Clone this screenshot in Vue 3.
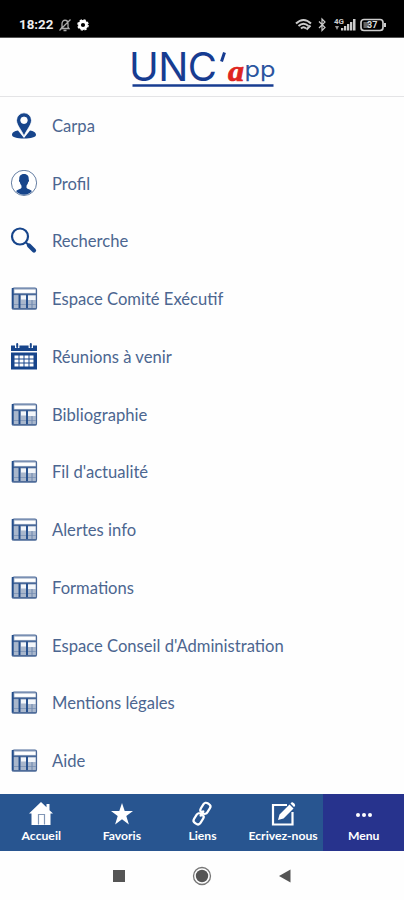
<script setup>
import { ref } from "vue";

const items = [
  { label: "Carpa", icon: "pin" },
  { label: "Profil", icon: "profile" },
  { label: "Recherche", icon: "search" },
  { label: "Espace Comité Exécutif", icon: "table" },
  { label: "Réunions à venir", icon: "calendar" },
  { label: "Bibliographie", icon: "table" },
  { label: "Fil d'actualité", icon: "table" },
  { label: "Alertes info", icon: "table" },
  { label: "Formations", icon: "table" },
  { label: "Espace Conseil d'Administration", icon: "table" },
  { label: "Mentions légales", icon: "table" },
  { label: "Aide", icon: "table" },
];

const tabs = ["Accueil", "Favoris", "Liens", "Ecrivez-nous", "Menu"];
const activeTab = ref("Menu");
</script>

<template>
  <div class="screen">
    <div class="status">
      <span class="time">18:22</span>
      <svg class="mute" width="14" height="14" viewBox="0 0 14 14">
        <path d="M3 10.500 4 9V6c0-5 6-5 6 0v3l1 1.500zM5.500 12.500h3M1.500 12.500l11-11" fill="none" stroke="#aaa" stroke-width="1.300" />
      </svg>
      <svg class="gear" width="12" height="12" viewBox="0 0 12 12">
        <circle cx="6" cy="6" r="3.500" fill="none" stroke="#fff" stroke-width="2.800" />
        <circle cx="6" cy="6" r="5.100" fill="none" stroke="#fff" stroke-width="1.400" stroke-dasharray="2.300 1.700" />
      </svg>
      <svg class="status-right" width="93" height="16" viewBox="0 0 93 16">
        <g fill="none" stroke="#ccc" stroke-width="2">
          <path d="M1 6.500Q8.500-.5 16 6.500M3.500 9Q8.500 4.500 13.500 9M6 11.500Q8.500 9 11 11.500" />
          <path d="M11.500 12.500l4-4" />
          <path d="M24 4.500l6 6-3 3V2l3 3-6 6" stroke-width="1.200" />
        </g>
        <text x="39" y="7" textLength="10" lengthAdjust="spacingAndGlyphs" font-size="6.500" font-weight="700" fill="#ccc">4G</text>
        <path d="M40 9h4l-2 4z" fill="#999" />
        <path d="M46 13.500V11h2.300v2.500zM49 13.500V9h2.300v4.500zM52 13.500V7h2.300v6.500zM55 13.500V5h2.300v8.500zM58 13.500V2h2.500v11.500z" fill="#ccc" />
        <rect x="66" y="2.500" width="22" height="11" rx="3" fill="none" stroke="#ccc" stroke-width="1.700" />
        <rect x="68.500" y="5" width="6" height="6" fill="#666" />
        <path d="M89 6h2v4h-2z" fill="#ccc" />
        <text x="72" y="11.200" font-size="9" font-weight="700" fill="#ddd">37</text>
      </svg>
    </div>

    <header class="header">
      <svg width="150" height="46" viewBox="0 0 150 46">
        <text x="2" y="33.500" class="logo-main" textLength="88" lengthAdjust="spacing">UNC</text>
        <path d="M97.500 5.500 94.500 14.500" stroke="#173c91" stroke-width="3" />
        <text x="101" y="33.500" class="logo-a" textLength="16" lengthAdjust="spacingAndGlyphs">a</text>
        <text x="117.500" y="29.500" class="logo-pp" textLength="31" lengthAdjust="spacingAndGlyphs">pp</text>
        <path d="M5.500 38.500H146.500" stroke="#173c91" stroke-width="2.300" />
      </svg>
    </header>

    <ul class="list">
      <li v-for="item in items" :key="item.label" class="row">
        <svg class="icon" width="28" height="28" viewBox="0 0 28 28">
          <g v-if="item.icon === 'pin'" fill="#17458b">
            <path d="M8 18.500C4.500 19 2 20.500 2 22.700 2 25.300 7 26.500 14 26.500s12-1.200 12-3.800c0-2.200-2.500-3.700-6-4.200L14 26z" />
            <path fill-rule="evenodd" stroke="#fff" stroke-width=".8" d="M14 .8a7.500 7.500 0 0 0-7.500 7.500c0 5 5 9.500 7.500 16C16.500 17.800 21.500 13.300 21.500 8.300A7.500 7.500 0 0 0 14 .8zM14 5a3.300 3.300 0 1 1 0 6.600A3.300 3.300 0 0 1 14 5z" />
          </g>
          <g v-else-if="item.icon === 'profile'">
            <circle cx="14" cy="12.900" r="12.600" fill="#fff" stroke="#667fa4" stroke-width="1" />
            <path d="M14 4c3.500 0 5 2.300 4.700 5.500.7.500.3 2.500-.6 2.800-.3 1.700-1 2.700-1.600 3.500v2c1 1.500 3.500 1.700 5.500 3.200-2 2.500-5 3.800-8 3.800s-6-1.300-8-3.800c2-1.500 4.500-1.700 5.500-3.200v-2c-.6-.8-1.300-1.800-1.600-3.500-.9-.3-1.300-2.300-.6-2.800C9 6.300 10.500 4 14 4z" fill="#17458b" />
          </g>
          <g v-else-if="item.icon === 'search'" fill="none" stroke="#17458b">
            <circle cx="10" cy="9.500" r="8" stroke-width="2.200" />
            <path d="M16 15.500l3 3" stroke-width="2" />
            <path d="M19 18.500l5 5" stroke-width="4.200" stroke-linecap="round" />
          </g>
          <g v-else-if="item.icon === 'calendar'">
            <path d="M1 2.500h26v5.500H1zM1 9.500h26V26.500H1z" fill="#17458b" />
            <path d="M7.200 0v5M20.800 0v5" stroke="#fff" stroke-width="4.400" />
            <path d="M7.200 1V4M20.800 1V4" stroke="#17458b" stroke-width="2" stroke-linecap="round" />
            <path d="M4.500 12.500h4v3h-4zM9.500 12.500h4v3h-4zM14.500 12.500h4v3h-4zM19.500 12.500h4v3h-4zM4.500 16.500h4v3h-4zM9.500 16.500h4v3h-4zM14.500 16.500h4v3h-4zM19.500 16.500h4v3h-4zM4.500 20.500h4v3h-4zM9.500 20.500h4v3h-4zM14.500 20.500h4v3h-4zM19.500 20.500h4v3h-4z" fill="#fff" />
          </g>
          <g v-else>
            <rect x="2.500" y="3" width="24" height="21" rx="1.500" fill="#a9b7cc" stroke="#4b6897" stroke-width="1.200" />
            <path d="M4.500 4.700h21v3.200h-21z" fill="#fff" />
            <path d="M11 10.500h5v4h-5zM18 10.500h7.500v4.500H18z" fill="#f3f6fa" />
            <path d="M4 19.500h22" stroke="#8499b9" stroke-width="1" />
            <path d="M3 9.300h23.500" stroke="#49699a" stroke-width="1.600" />
            <path d="M2.700 3v21M9.500 9.500v14M17 9.500v14" stroke="#234d8b" stroke-width="1.900" />
            <path d="M22 15v8.500" stroke="#6f87ad" stroke-width="1" />
            <path d="M2 23.800H26.500" stroke="#4b6897" stroke-width="1.400" />
          </g>
        </svg>
        <span class="label">{{ item.label }}</span>
      </li>
    </ul>

    <nav class="tabs">
      <a v-for="tab in tabs" :key="tab" class="tab" :class="{ active: tab === activeTab }" @click="activeTab = tab">
        <svg width="28" height="26" viewBox="0 0 28 26">
          <g v-if="tab === 'Accueil'">
            <path d="M14 1 2 12.500h2.500V24h19V12.500H26l-3.500-3.300V3h-3v3.300z" fill="#fff" />
            <path d="M11.500 23.500v-10h6v10" fill="none" stroke="#8196b5" stroke-width="1.200" />
          </g>
          <path v-else-if="tab === 'Favoris'" d="M14 2l2.700 8H25l-6.700 5 2.600 8.500L14 18.300 7.100 23.500 9.700 15 3 10h8.300z" fill="#fff" />
          <g v-else-if="tab === 'Liens'" fill="none" stroke="#fff" stroke-width="2.200">
            <rect x="13.600" y="1.800" width="7.600" height="11" rx="3" transform="rotate(32 17.400 7.300)" />
            <rect x="6.800" y="12.300" width="7.600" height="11" rx="3" transform="rotate(32 10.600 17.800)" />
            <path d="M15.700 9.500l-3.500 6" />
          </g>
          <g v-else-if="tab === 'Ecrivez-nous'">
            <path d="M18 4H4v19.500h19.500V11" fill="none" stroke="#fff" stroke-width="2.200" />
            <path d="M9 19l1.500-5.500L20.500 3.500l4 4-10 10zM21.500 2.500l1-1c1-1 4.500 2 3.500 3.500l-1 1z" fill="#fff" />
          </g>
          <g v-else fill="#fff">
            <circle cx="8" cy="14" r="2" />
            <circle cx="14" cy="14" r="2" />
            <circle cx="20" cy="14" r="2" />
          </g>
        </svg>
        <span>{{ tab }}</span>
      </a>
    </nav>

    <div class="system">
      <svg width="14" height="14"><rect x="1" y="1" width="12" height="12" fill="#555" /></svg>
      <svg width="20" height="20">
        <circle cx="10" cy="10" r="8.500" fill="none" stroke="#777" stroke-width="1.300" />
        <circle cx="10" cy="10" r="6.200" fill="#555" />
      </svg>
      <svg width="14" height="14"><path d="M1 7 12.500.5v13z" fill="#555" /></svg>
    </div>
  </div>
</template>

<style>
body {
  margin: 0;
  background: #fff;
}
</style>

<style scoped>
.screen {
  width: 404px;
  height: 900px;
  display: flex;
  flex-direction: column;
  overflow: hidden;
  background: #fefefe;
  font-family: Lato, Carlito, sans-serif;
}
.status {
  box-sizing: border-box;
  height: 38px;
  flex: none;
  display: flex;
  align-items: center;
  padding: 12px 16px 0 19px;
  background: #000;
  border-bottom: 1px solid #555;
  color: #fff;
  font-family: Roboto, sans-serif;
}
.time {
  width: 34px;
  font-size: 13.3px;
  font-weight: 700;
  color: #eee;
}
.mute {
  margin-left: 5px;
}
.gear {
  margin-left: 5px;
}
.status-right {
  margin-left: auto;
}
.header {
  box-sizing: border-box;
  flex: none;
  height: 59px;
  display: flex;
  justify-content: center;
  padding-top: 9px;
  border-bottom: 1px solid #e4e4e6;
}
.logo-main {
  font: 400 40px Inter, sans-serif;
  fill: #173c91;
}
.logo-a {
  font: italic 700 29px "Liberation Serif", serif;
  fill: #df2520;
  stroke: #df2520;
  stroke-width: 0.7;
}
.logo-pp {
  font: 400 22px Inter, sans-serif;
  fill: #2b559f;
}
.list {
  flex: 1;
  display: flex;
  flex-direction: column;
  margin: 0;
  padding: 0 0 4px 10px;
  list-style: none;
}
.row {
  flex: 1;
  display: flex;
  align-items: center;
  gap: 14px;
}
.label {
  font-size: 16.6px;
  color: #4c6690;
  white-space: nowrap;
}
.tabs {
  flex: none;
  height: 57px;
  display: flex;
  padding-left: 1px;
  background: #285590;
}
.tab {
  flex: 1;
  display: flex;
  flex-direction: column;
  align-items: center;
  padding-top: 7px;
  color: #fff;
  font-size: 12.2px;
  font-weight: 700;
  line-height: 17px;
  white-space: nowrap;
}
.active {
  background: #27338d;
}
.system {
  flex: none;
  height: 49px;
  display: flex;
  align-items: center;
  justify-content: center;
  gap: 66px;
}
</style>
